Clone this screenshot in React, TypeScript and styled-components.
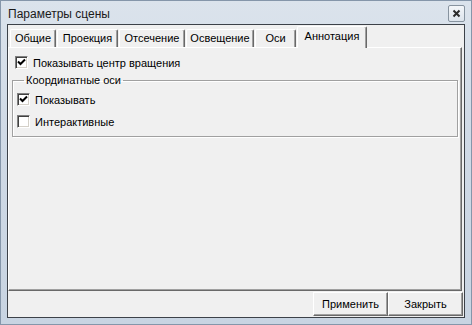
import React from 'react';
import styled, { createGlobalStyle } from 'styled-components';

const GlobalStyle = createGlobalStyle`
  html, body {
    margin: 0;
    padding: 0;
    background: #c9d6e5;
  }
  * {
    box-sizing: border-box;
  }
`;

const TABS = ['Общие', 'Проекция', 'Отсечение', 'Освещение', 'Оси', 'Аннотация'];
const TAB_WIDTHS = [46, 61, 66, 68, 41, 70];

const CheckMark = () => (
  <svg width="13" height="13" viewBox="0 0 13 13">
    <path d="M3 5.5 L5.5 8 L10 3.5" fill="none" stroke="#000" strokeWidth="2" />
  </svg>
);

const Checkbox: React.FC<{ checked?: boolean; label: string }> = ({ checked, label }) => (
  <CheckRow>
    <CheckBox>{checked && <CheckMark />}</CheckBox>
    <span>{label}</span>
  </CheckRow>
);

const App: React.FC = () => {
  return (
    <>
      <GlobalStyle />
      <Window>
        <TitleBar>
          <Title>Параметры сцены</Title>
          <CloseButton>
            <svg width="9" height="9" viewBox="0 0 9 9">
              <path d="M1.5 1.5 L7.5 7.5 M7.5 1.5 L1.5 7.5" stroke="#2b2b2b" strokeWidth="2" />
            </svg>
          </CloseButton>
        </TitleBar>
        <Client>
          <TabStrip>
            {TABS.map((t, i) => (
              <Tab key={t} $active={i === TABS.length - 1} $width={TAB_WIDTHS[i]}>
                {t}
              </Tab>
            ))}
          </TabStrip>
          <Panel>
            <Checkbox checked label="Показывать центр вращения" />
            <Group>
              <legend>Координатные оси</legend>
              <Checkbox checked label="Показывать" />
              <Checkbox label="Интерактивные" />
            </Group>
          </Panel>
          <Footer>
            <Button>Применить</Button>
            <Button>Закрыть</Button>
          </Footer>
        </Client>
      </Window>
    </>
  );
};

const Window = styled.div`
  width: 472px;
  height: 325px;
  border: 1px solid #8596aa;
  background: linear-gradient(to bottom, #dbe3ec 0%, #d0dae6 40%, #c8d4e2 100%);
  padding: 0 6px 6px 6px;
  display: flex;
  flex-direction: column;
  font-family: 'Liberation Sans', Arial, sans-serif;
  font-size: 11px;
  color: #000;
`;

const TitleBar = styled.div`
  height: 23px;
  display: flex;
  align-items: center;
  justify-content: space-between;
  padding-left: 1px;
`;

const Title = styled.div`
  font-size: 12px;
  color: #1a1a1a;
  margin-top: 2px;
`;

const CloseButton = styled.div`
  width: 17px;
  height: 17px;
  margin-top: 1px;
  border: 1px solid #87939f;
  border-radius: 2px;
  background: linear-gradient(to bottom, #f3f6f9, #dde4ec);
  display: flex;
  align-items: center;
  justify-content: center;
`;

const Client = styled.div`
  flex: 1;
  border: 1px solid #3c4148;
  background: #f0f0f0;
  display: flex;
  flex-direction: column;
  padding-top: 1px;
`;

const TabStrip = styled.div`
  height: 21px;
  display: flex;
  align-items: flex-end;
  padding-left: 2px;
  gap: 1px;
  position: relative;
  z-index: 1;
`;

const Tab = styled.div<{ $active?: boolean; $width: number }>`
  width: ${({ $width }) => $width}px;
  height: ${({ $active }) => ($active ? 22 : 18)}px;
  margin-bottom: ${({ $active }) => ($active ? -1 : 0)}px;
  display: flex;
  align-items: center;
  justify-content: center;
  padding-bottom: ${({ $active }) => ($active ? 4 : 1)}px;
  background: #f0f0f0;
  border-top: 1px solid #fff;
  border-left: 1px solid #fff;
  border-right: 1px solid #696969;
  border-radius: 2px 2px 0 0;
  box-shadow: inset -1px 0 0 #a0a0a0;
  white-space: nowrap;
`;

const Panel = styled.div`
  height: 244px;
  margin-right: 2px;
  border-top: 1px solid #fff;
  border-left: 1px solid #fff;
  border-right: 1px solid #696969;
  border-bottom: 1px solid #696969;
  box-shadow: inset -1px -1px 0 #a0a0a0;
  padding: 8px 0 0 6px;
  display: flex;
  flex-direction: column;
`;

const CheckRow = styled.div`
  display: flex;
  align-items: center;
  gap: 5px;
  height: 13px;
`;

const CheckBox = styled.div`
  width: 13px;
  height: 13px;
  flex: none;
  background: #fff;
  border: 1px solid;
  border-color: #808080 #fff #fff #808080;
  box-shadow: inset 1px 1px 0 #404040, inset -1px -1px 0 #d4d0c8;
  position: relative;

  svg {
    position: absolute;
    left: -1px;
    top: -1px;
  }
`;

const Group = styled.fieldset`
  margin: 5px 3px 0 -3px;
  height: 63px;
  padding: 7px 0 0 4px;
  border: 1px solid #a0a0a0;
  box-shadow: inset 1px 1px 0 #fff, 1px 1px 0 #fff;
  display: flex;
  flex-direction: column;
  gap: 9px;

  legend {
    margin-left: 7px;
    padding: 0 2px;
    line-height: 12px;
  }
`;

const Footer = styled.div`
  flex: 1;
  display: flex;
  justify-content: flex-end;
  align-items: flex-start;
  padding: 1px 1px 0 0;
`;

const Button = styled.div`
  width: 75px;
  height: 24px;
  display: flex;
  align-items: center;
  justify-content: center;
  border-top: 1px solid #fff;
  border-left: 1px solid #fff;
  border-right: 1px solid #696969;
  border-bottom: 1px solid #696969;
  box-shadow: inset -1px -1px 0 #a0a0a0;
`;

export default App;
